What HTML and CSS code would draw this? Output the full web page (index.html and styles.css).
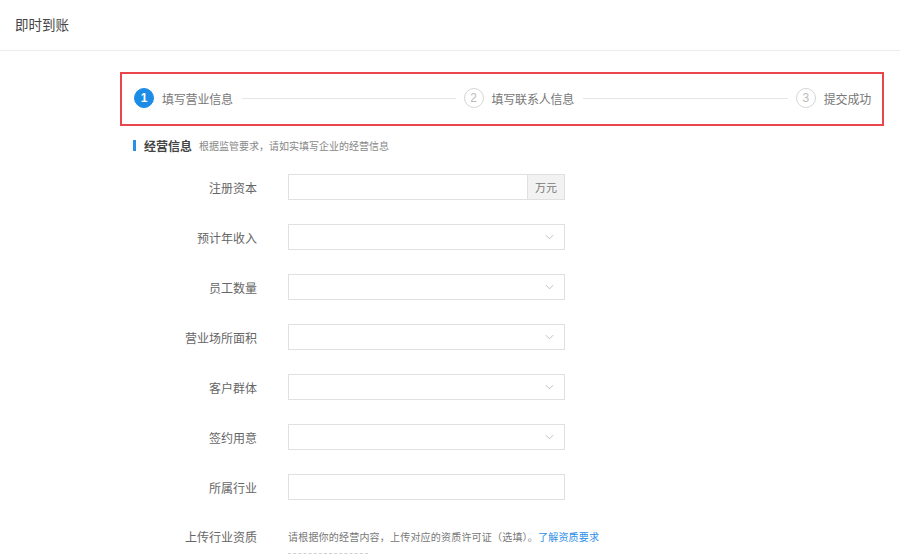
FILE: index.html
```html
<!DOCTYPE html>
<html lang="zh-CN">
<head>
<meta charset="utf-8">
<title>即时到账</title>
<link rel="stylesheet" href="styles.css">
</head>
<body>
<header class="topbar">即时到账</header>
<main class="content">
  <div class="steps">
    <div class="step active"><span class="step-num">1</span><span class="step-text">填写营业信息</span></div>
    <div class="step-line line-a"></div>
    <div class="step"><span class="step-num">2</span><span class="step-text">填写联系人信息</span></div>
    <div class="step-line line-b"></div>
    <div class="step"><span class="step-num">3</span><span class="step-text">提交成功</span></div>
  </div>

  <div class="section-title"><span class="bar"></span><span class="title">经营信息</span><span class="sub">根据监管要求，请如实填写企业的经营信息</span></div>

  <form class="form">
    <div class="row">
      <label class="label">注册资本</label>
      <div class="field group"><span class="input-area"></span><span class="addon">万元</span></div>
    </div>
    <div class="row">
      <label class="label">预计年收入</label>
      <div class="field select"><svg class="chev" viewBox="0 0 10 6" width="9" height="6"><path d="M1 1l4 4 4-4" fill="none" stroke="#b8b8b8" stroke-width="1"/></svg></div>
    </div>
    <div class="row">
      <label class="label">员工数量</label>
      <div class="field select"><svg class="chev" viewBox="0 0 10 6" width="9" height="6"><path d="M1 1l4 4 4-4" fill="none" stroke="#b8b8b8" stroke-width="1"/></svg></div>
    </div>
    <div class="row">
      <label class="label">营业场所面积</label>
      <div class="field select"><svg class="chev" viewBox="0 0 10 6" width="9" height="6"><path d="M1 1l4 4 4-4" fill="none" stroke="#b8b8b8" stroke-width="1"/></svg></div>
    </div>
    <div class="row">
      <label class="label">客户群体</label>
      <div class="field select"><svg class="chev" viewBox="0 0 10 6" width="9" height="6"><path d="M1 1l4 4 4-4" fill="none" stroke="#b8b8b8" stroke-width="1"/></svg></div>
    </div>
    <div class="row">
      <label class="label">签约用意</label>
      <div class="field select"><svg class="chev" viewBox="0 0 10 6" width="9" height="6"><path d="M1 1l4 4 4-4" fill="none" stroke="#b8b8b8" stroke-width="1"/></svg></div>
    </div>
    <div class="row">
      <label class="label">所属行业</label>
      <div class="field"></div>
    </div>
    <div class="row upload-row">
      <label class="label">上传行业资质</label>
      <div class="upload">
        <p class="hint">请根据你的经营内容，上传对应的资质许可证（选填）。<a class="link">了解资质要求</a></p>
        <div class="upload-box"></div>
      </div>
    </div>
  </form>
</main>
</body>
</html>
```

FILE: styles.css
```css
* { box-sizing: border-box; }
html, body { margin: 0; padding: 0; background: #fff; }
body {
  font-family: "Noto Sans CJK SC", "Noto Sans", sans-serif;
  color: #555;
  font-size: 12px;
}
.topbar {
  height: 51px;
  padding-left: 15px;
  line-height: 49px;
  font-size: 13.5px;
  color: #444;
  border-bottom: 1px solid #ececec;
}
.content {
  padding-left: 120px;
  padding-top: 21px;
}
.steps {
  width: 764px;
  height: 54px;
  border: 2px solid #e8464a;
  display: flex;
  align-items: center;
  padding: 0 11px 2px 12px;
}
.step {
  display: flex;
  align-items: center;
  gap: 8px;
  color: #777;
  font-size: 12px;
}
.step-num {
  width: 20px;
  height: 20px;
  border-radius: 50%;
  border: 1px solid #d6d6d6;
  color: #bbb;
  display: flex;
  align-items: center;
  justify-content: center;
  font-family: "Liberation Sans", sans-serif;
  font-size: 12px;
}
.step.active .step-num {
  background: #1c8ce6;
  border-color: #1c8ce6;
  color: #fff;
  font-weight: bold;
}
.step .step-text { letter-spacing: -0.2px; }
.step-line {
  height: 1px;
  background: #e6e6e6;
  margin: 0 8px 0 9px;
}
.line-a { flex: 213 1 0; }
.line-b { flex: 204 1 0; }
.section-title {
  display: flex;
  align-items: center;
  margin: 12px 0 0 13px;
  height: 14px;
}
.bar {
  width: 3px;
  height: 11px;
  background: #2b8ee8;
  margin-right: 8px;
}
.title {
  font-weight: bold;
  color: #444;
  font-size: 12px;
  margin-right: 7px;
}
.sub {
  font-size: 10px;
  color: #888;
}
.form {
  margin-top: 22px;
  display: flex;
  flex-direction: column;
  gap: 24px;
}
.row {
  display: flex;
  align-items: center;
  height: 26px;
}
.label {
  width: 137px;
  text-align: right;
  color: #666;
  font-size: 12px;
  margin-right: 31px;
}
.field {
  width: 277px;
  height: 26px;
  border: 1px solid #e0e0e0;
  background: #fff;
  display: flex;
  align-items: center;
}
.select { justify-content: flex-end; padding-right: 10px; }
.group .input-area { flex: 1; }
.group .addon {
  width: 37px;
  height: 100%;
  background: #f2f2f2;
  border-left: 1px solid #e0e0e0;
  display: flex;
  align-items: center;
  justify-content: center;
  color: #777;
  font-size: 11px;
}
.upload-row {
  align-items: flex-start;
  margin-top: 4px;
}
.upload-row .label { line-height: 18px; }
.upload { display: flex; flex-direction: column; }
.hint {
  margin: 0;
  font-size: 10px;
  line-height: 18px;
  color: #777;
  letter-spacing: 0.2px;
}
.link { color: #2b8ee8; }
.upload-box {
  margin-top: 7px;
  width: 80px;
  height: 80px;
  border: 1px dashed #cfcfcf;
}
```
